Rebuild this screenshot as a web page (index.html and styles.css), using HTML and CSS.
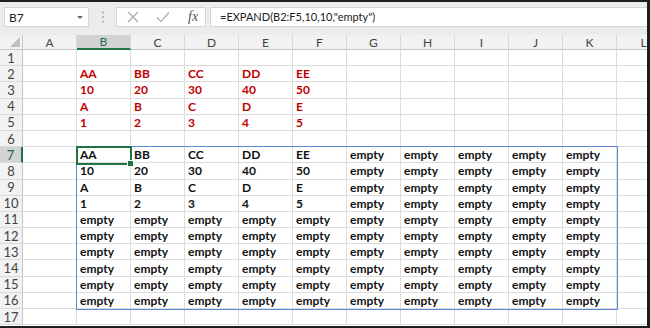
FILE: index.html
```html
<!DOCTYPE html>
<html lang="en">

<head>
    <meta charset="UTF-8">
    <title>EXPAND example</title>
    <link rel="stylesheet" href="styles.css">
</head>

<body>
    <div class="window">
        <!-- Formula bar -->
        <div class="formula-bar">
            <div class="name-box">
                <span>B7</span>
                <span class="caret"></span>
            </div>
            <div class="grip">
                <svg width="4" height="12" viewBox="0 0 4 12">
                    <circle cx="2" cy="1.5" r="1" fill="#a6a6a6" />
                    <circle cx="2" cy="6" r="1" fill="#a6a6a6" />
                    <circle cx="2" cy="10.5" r="1" fill="#a6a6a6" />
                </svg>
            </div>
            <div class="fn-buttons">
                <svg class="icon" width="12" height="12" viewBox="0 0 12 12">
                    <path d="M1 1 L11 11 M11 1 L1 11" stroke="#a9a9a9" stroke-width="1.2" fill="none" />
                </svg>
                <svg class="icon" width="14" height="12" viewBox="0 0 14 12">
                    <path d="M1 6.5 L5 10.5 L13 1.5" stroke="#a9a9a9" stroke-width="1.2" fill="none" />
                </svg>
                <span class="fx">fx</span>
            </div>
            <div class="formula">=EXPAND(B2:F5,10,10,"empty")</div>
        </div>

        <!-- Sheet -->
        <div class="sheet">
            <div class="grid" id="grid"></div>
            <div class="range"></div>
            <div class="active-cell"><span class="handle"></span></div>
        </div>
    </div>

    <script>
        const COLS = ['A', 'B', 'C', 'D', 'E', 'F', 'G', 'H', 'I', 'J', 'K', 'L'];
        const SOURCE = [
            ['AA', 'BB', 'CC', 'DD', 'EE'],
            ['10', '20', '30', '40', '50'],
            ['A', 'B', 'C', 'D', 'E'],
            ['1', '2', '3', '4', '5']
        ];

        // value shown in a cell, by row number and column index (0 = A)
        function cellValue(row, col) {
            if (row >= 2 && row <= 5 && col >= 1 && col <= 5) return SOURCE[row - 2][col - 1];
            if (row >= 7 && row <= 16 && col >= 1 && col <= 10) {
                const r = row - 7, c = col - 1;
                if (r < 4 && c < 5) return SOURCE[r][c];
                return 'empty';
            }
            return '';
        }

        const grid = document.getElementById('grid');
        let html = '<div class="corner"><svg width="10" height="10" viewBox="0 0 10 10"><polygon points="10,0 10,10 0,10" fill="#bfbfbf"/></svg></div>';
        COLS.forEach(c => {
            html += `<div class="col-head${c === 'B' ? ' selected' : ''}">${c}</div>`;
        });
        for (let row = 1; row <= 17; row++) {
            html += `<div class="row-head${row === 7 ? ' selected' : ''}">${row}</div>`;
            COLS.forEach((c, i) => {
                const red = row >= 2 && row <= 5 ? ' red' : '';
                html += `<div class="cell${red}">${cellValue(row, i)}</div>`;
            });
        }
        grid.innerHTML = html;
    </script>
</body>

</html>
```

FILE: styles.css
```css
/* General styling */
body {
    margin: 0;
    font-family: 'Lato', 'Liberation Sans', sans-serif;
    background-color: #fff;
}

.window {
    width: 650px;
    height: 328px;
    box-sizing: border-box;
    border-top: 2px solid #1f1f1f;
    border-right: 3px solid #1f1f1f;
    border-bottom: 2px solid #1f1f1f;
    display: flex;
    flex-direction: column;
    overflow: hidden;
}

/* Formula bar */
.formula-bar {
    height: 33px;
    flex-shrink: 0;
    box-sizing: border-box;
    background-color: #ececec;
    display: flex;
    align-items: flex-start;
    padding: 5px 0 0 4px;
}

.name-box {
    width: 85px;
    height: 20px;
    box-sizing: border-box;
    background-color: #fff;
    border: 1px solid #d6d6d6;
    display: flex;
    align-items: center;
    justify-content: space-between;
    padding: 0 5px 0 4px;
    font-size: 12px;
    color: #222;
}

.caret {
    width: 0;
    height: 0;
    border-left: 3px solid transparent;
    border-right: 3px solid transparent;
    border-top: 3px solid #666;
}

.grip {
    width: 27px;
    height: 20px;
    display: flex;
    align-items: center;
    justify-content: center;
}

.fn-buttons {
    width: 90px;
    height: 20px;
    box-sizing: border-box;
    background-color: #fff;
    border: 1px solid #d6d6d6;
    display: flex;
    align-items: center;
    gap: 17px;
    padding-left: 10px;
}

.fx {
    font-family: 'Liberation Serif', serif;
    font-style: italic;
    font-size: 14px;
    color: #555;
    margin-left: 1px;
}

.formula {
    flex: 1;
    height: 20px;
    box-sizing: border-box;
    margin-left: 4px;
    background-color: #fff;
    border: 1px solid #d6d6d6;
    border-right: none;
    padding-left: 9px;
    font-size: 11px;
    line-height: 18px;
    color: #222;
}

/* Sheet */
.sheet {
    position: relative;
    flex: 1;
    overflow: hidden;
}

.grid {
    display: grid;
    grid-template-columns: 23px repeat(12, 54px);
    grid-template-rows: 15px repeat(17, 16.2px);
}

.corner,
.col-head,
.row-head {
    background-color: #f2f2f2;
    color: #444;
    box-sizing: border-box;
    display: flex;
    align-items: center;
    justify-content: center;
}

.corner {
    border-right: 1px solid #c6c6c6;
    border-bottom: 1px solid #c6c6c6;
    align-items: flex-end;
    justify-content: flex-end;
    padding: 0 2px 2px 0;
}

.col-head {
    font-size: 12px;
    border-right: 1px solid #dadada;
    border-bottom: 1px solid #c6c6c6;
}

.row-head {
    font-size: 13px;
    border-right: 1px solid #c6c6c6;
    border-bottom: 1px solid #dadada;
}

.col-head.selected {
    background-color: #d3d3d3;
    color: #1e6b47;
    border-bottom: 2px solid #217346;
}

.row-head.selected {
    background-color: #d3d3d3;
    color: #1e6b47;
    border-right: 2px solid #217346;
}

.cell {
    box-sizing: border-box;
    border-right: 1px solid #dcdcdc;
    border-bottom: 1px solid #dcdcdc;
    padding-left: 3px;
    font-size: 12px;
    font-weight: bold;
    color: #111;
    display: flex;
    align-items: center;
    white-space: nowrap;
    overflow: hidden;
}

.cell.red {
    color: #c00000;
}

/* Expanded range outline */
.range {
    position: absolute;
    left: 76px;
    top: 111px;
    width: 542px;
    height: 164px;
    box-sizing: border-box;
    border: 1px solid #5d8ad6;
}

/* Active cell B7 */
.active-cell {
    position: absolute;
    left: 76px;
    top: 111px;
    width: 56px;
    height: 19px;
    box-sizing: border-box;
    border: 2px solid #217346;
}

.handle {
    position: absolute;
    right: -4px;
    bottom: -4px;
    width: 5px;
    height: 5px;
    background-color: #217346;
    border: 1px solid #fff;
}
```
